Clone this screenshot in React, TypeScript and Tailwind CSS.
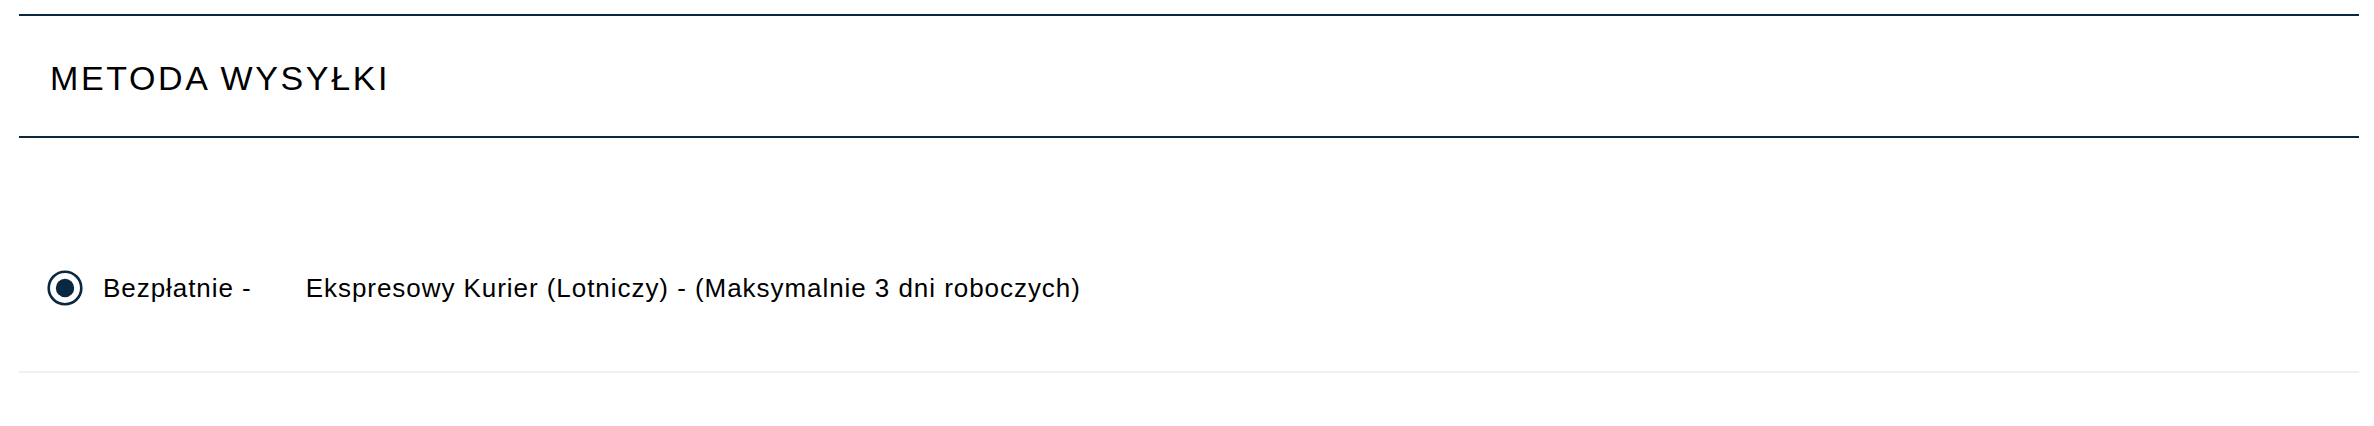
const ShippingOption = ({ price, label }: { price: string; label: string }) => {
  return (
    <label className="flex items-center">
      <svg width="36" height="36" viewBox="0 0 36 36" className="shrink-0">
        <circle cx="18" cy="18" r="16.3" fill="none" stroke="#0a2840" strokeWidth="2.6" />
        <circle cx="18" cy="18" r="9.2" fill="#0a2840" />
      </svg>
      <span className="ml-[20px] text-[26px] leading-[26px] tracking-[0.95px] text-black">{price}</span>
      <span className="ml-[54px] text-[26px] leading-[26px] tracking-[0.95px] text-black">{label}</span>
    </label>
  );
};

export default function App() {
  return (
    <div className="min-h-[426px] bg-white pt-[14px] font-['Liberation_Sans',Arial,sans-serif]">
      <div className="ml-[19px] w-[2340px]">
        <div className="h-[124px] border-y-2 border-[#0a2840] pl-[31px] pt-[45px]">
          <h2 className="text-[34px] font-normal leading-[34px] tracking-[2.6px] text-black">
            METODA WYSYŁKI
          </h2>
        </div>
        <div className="border-b-2 border-[#f0f0f0] pb-[65px] pl-[28px] pt-[132px]">
          <ShippingOption
            price="Bezpłatnie -"
            label="Ekspresowy Kurier (Lotniczy) - (Maksymalnie 3 dni roboczych)"
          />
        </div>
      </div>
    </div>
  );
}
